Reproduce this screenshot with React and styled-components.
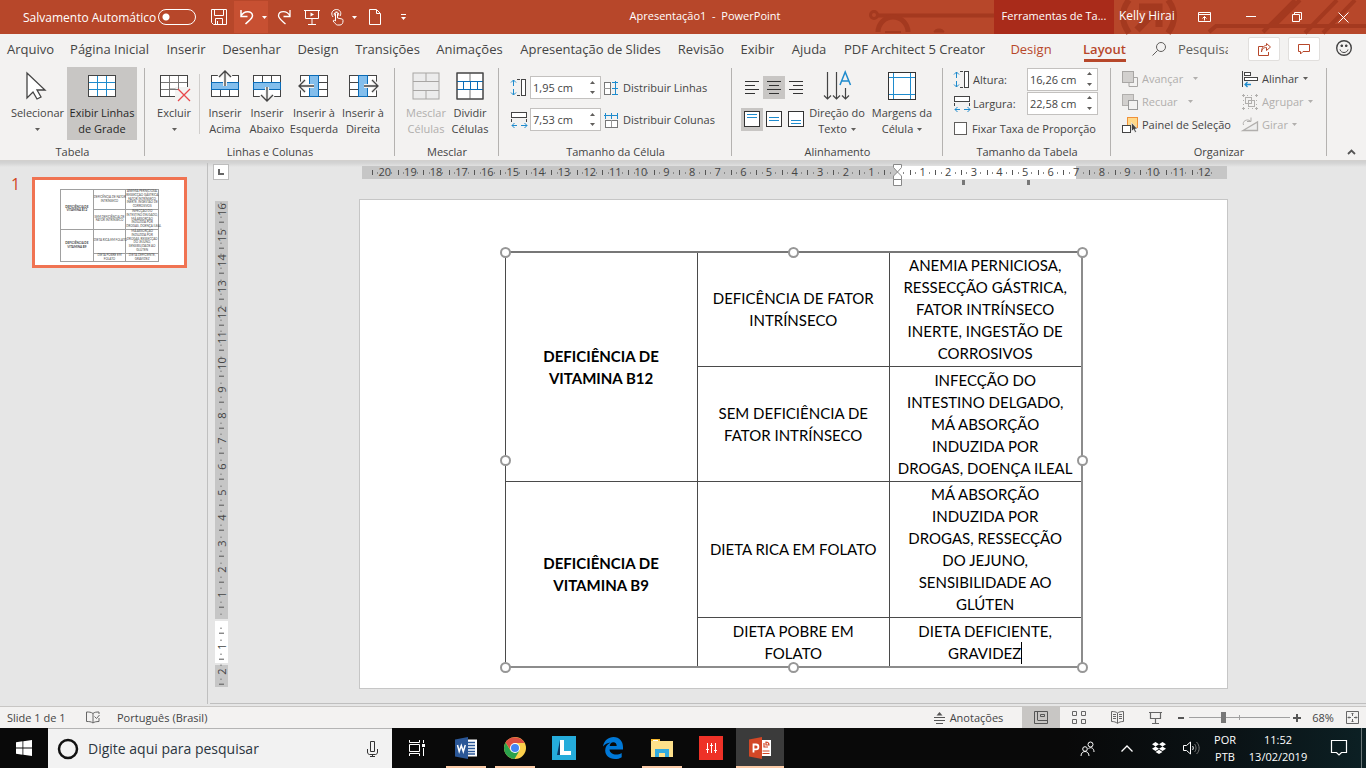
import React from "react";
import styled, { createGlobalStyle, css } from "styled-components";

const uiFont = '"Open Sans", "Noto Sans", sans-serif';
const slideFont = 'Lato, "Liberation Sans", sans-serif';
const c = {
  brand: "#b7472a",
  brandDark: "#a4391f",
  context: "#a92b1a",
  surface: "#f3f2f1",
  pressed: "#c8c6c4",
  line: "#b4b2b0",
  text: "#444444",
  disabled: "#b1afad",
  blue: "#1e8bcd",
  work: "#e6e6e6",
};

const GlobalStyle = createGlobalStyle`
  *, *::before, *::after { box-sizing: border-box; }
  body { margin: 0; font-family: ${uiFont}; font-size: 11px; color: ${c.text}; }
  button, input { font: inherit; color: inherit; margin: 0; padding: 0; border: 0; background: none; border-radius: 0; }
  svg { display: block; flex: none; fill: none; overflow: visible; }
`;

const Page = styled.div`
  display: flex;
  flex-direction: column;
  min-height: 100vh;
  min-width: 1366px;
  background: ${c.work};
`;

/* ---------- title bar ---------- */
const TitleBar = styled.header`
  position: relative;
  display: flex;
  align-items: stretch;
  height: 34px;
  background: ${c.brand};
  color: #fff;
  svg { stroke: #fff; }
`;
const QuickAccess = styled.div`
  display: flex;
  align-items: center;
  width: 416px;
  padding-left: 23px;
`;
const AutoSave = styled.label`
  display: flex;
  flex: none;
  align-items: center;
  justify-content: space-between;
  width: 173px;
  margin-right: 8px;
  font-size: 12px;
  white-space: nowrap;
`;
const Toggle = styled.input.attrs({ type: "checkbox" })`
  appearance: none;
  flex: none;
  width: 38px;
  height: 16px;
  border: 1px solid #fff;
  border-radius: 8px;
  background: radial-gradient(circle at 7px 7px, #fff 3px, transparent 4px);
`;
const QuickButton = styled.button`
  display: flex;
  align-items: center;
  justify-content: center;
  width: ${(p) => p.$w}px;
  height: 32px;
  background: ${(p) => (p.$on ? "#c75032" : "transparent")};
`;
const DocTitle = styled.h1`
  flex: 1;
  margin: 0;
  font-size: 11px;
  font-weight: 400;
  line-height: 32px;
  text-align: center;
  white-space: pre;
`;
const CircuitArt = styled.svg`
  position: absolute;
  top: 0;
  right: 0;
`;
const WindowSide = styled.div`
  position: relative;
  display: flex;
  width: 372px;
  line-height: 32px;
`;
const ContextTitle = styled.div`
  width: 120px;
  background: ${c.context};
  text-align: center;
  white-space: nowrap;
`;
const UserName = styled.div`
  width: 66px;
  padding-left: 5px;
  font-size: 12px;
  white-space: nowrap;
`;
const WindowButton = styled.button`
  display: flex;
  align-items: center;
  justify-content: center;
  width: ${(p) => p.$w}px;
`;

/* ---------- tabs ---------- */
const TabBar = styled.nav`
  display: flex;
  height: 33px;
  padding-left: 1px;
  background: ${c.surface};
`;
const Tab = styled.button`
  position: relative;
  width: ${(p) => p.$w}px;
  height: 30px;
  font-size: 13px;
  line-height: 30px;
  white-space: nowrap;
  text-align: center;
  color: ${(p) => (p.$context ? c.brand : c.text)};
  ${(p) =>
    p.$active &&
    css`
      font-weight: 600;
      &::after {
        content: "";
        position: absolute;
        left: 50%;
        bottom: 2px;
        width: 42px;
        height: 3px;
        margin-left: -21px;
        background: ${c.brand};
      }
    `}
`;
const TabTools = styled.div`
  display: flex;
  align-items: flex-start;
  margin-left: auto;
  padding: 3px 14px 0 0;
`;
const Search = styled.label`
  display: flex;
  align-items: center;
  gap: 12px;
  width: 76px;
  height: 24px;
  margin-right: 20px;
`;
const SearchInput = styled.input`
  width: 50px;
  font-size: 13px;
  &::placeholder { color: #605e5c; opacity: 1; }
`;
const CardButton = styled.button`
  display: flex;
  align-items: center;
  justify-content: center;
  width: 32px;
  height: 24px;
  margin-right: 8px;
  background: #fff;
  border: 1px solid #e1dfdd;
  border-radius: 2px;
`;
const FaceButton = styled.button`
  margin: 3px 0 0 8px;
`;

/* ---------- ribbon ---------- */
const Ribbon = styled.section`
  display: flex;
  height: 94px;
  background: ${c.surface};
  border-bottom: 1px solid #d2d0ce;
`;
const GroupBox = styled.div`
  display: flex;
  flex-direction: column;
  width: ${(p) => p.$w}px;
  background: linear-gradient(${c.line}, ${c.line}) right 1px / 1px 88px no-repeat;
`;
const GroupBody = styled.div`
  display: flex;
  height: 77px;
  padding-left: ${(p) => p.$pad || 0}px;
`;
const GroupTitle = styled.div`
  line-height: 16px;
  text-align: center;
  white-space: nowrap;
`;
const BigButton = styled.button`
  display: flex;
  flex-direction: column;
  align-items: center;
  width: ${(p) => p.$w}px;
  height: 73px;
  padding-top: 3px;
  line-height: 16px;
  background: ${(p) => (p.$on ? c.pressed : "transparent")};
  color: ${(p) => (p.disabled ? c.disabled : p.$on ? "#262626" : c.text)};
`;
const IconSlot = styled.span`
  display: flex;
  align-items: center;
  justify-content: center;
  height: 32px;
  margin-bottom: 3px;
`;
const LabelLine = styled.span`
  display: flex;
  align-items: center;
  justify-content: center;
  gap: 4px;
  height: 16px;
  white-space: nowrap;
`;
const Rule = styled.div`
  width: 1px;
  height: 60px;
  margin: 7px 4px 0 0;
  background: #d0cecc;
`;
const Stack = styled.div`
  display: flex;
  flex-direction: column;
  width: ${(p) => p.$w}px;
  gap: ${(p) => p.$gap || 0}px;
  padding-top: ${(p) => p.$top || 0}px;
`;
const Row = styled.div`
  display: flex;
  align-items: center;
  height: ${(p) => p.$h}px;
`;
const FieldLabel = styled.label`
  display: flex;
  align-items: center;
  gap: 3px;
  width: ${(p) => p.$w}px;
  white-space: nowrap;
`;
const SpinBox = styled.div`
  display: flex;
  width: 71px;
  height: 23px;
  background: #fff;
  border: 1px solid #c3c1bf;
`;
const SpinInput = styled.input`
  width: 54px;
  padding-left: 2px;
`;
const SpinArrows = styled.div`
  display: flex;
  flex-direction: column;
  width: 14px;
`;
const SpinArrow = styled.button`
  display: flex;
  flex: 1;
  align-items: center;
  justify-content: center;
`;
const SmallButton = styled.button`
  display: flex;
  align-items: center;
  gap: ${(p) => p.$gap || 4}px;
  height: 23px;
  padding-left: ${(p) => p.$inset || 0}px;
  white-space: nowrap;
  color: ${(p) => (p.disabled ? c.disabled : c.text)};
`;
const CaretSlot = styled.span`
  padding-left: ${(p) => (p.$wide ? 6 : 0)}px;
`;
const AlignButton = styled.button`
  display: flex;
  align-items: center;
  justify-content: center;
  width: 22px;
  height: 23px;
  background: ${(p) => (p.$on ? c.pressed : "transparent")};
`;
const CheckLabel = styled.label`
  display: flex;
  align-items: center;
  gap: 5px;
  height: 26px;
  white-space: nowrap;
`;
const CheckBox = styled.input.attrs({ type: "checkbox" })`
  appearance: none;
  width: 13px;
  height: 13px;
  background: #fff;
  border: 1px solid #605e5c;
`;
const CollapseButton = styled.button`
  display: flex;
  align-items: flex-end;
  justify-content: center;
  width: 39px;
  padding: 0 0 5px 10px;
`;

/* ---------- work area ---------- */
const Work = styled.main`
  display: flex;
  flex: 1;
  background: linear-gradient(#d0d0d0, #d4d4d4 2px, ${c.work} 6px);
`;
const ThumbPane = styled.aside`
  display: flex;
  align-items: flex-start;
  width: 208px;
  margin: 2px 0;
  padding: 14px 0 0 11px;
  border-right: 1px solid #bfbfbf;
`;
const ThumbNumber = styled.span`
  width: 21px;
  font-size: 16px;
  line-height: 14px;
  color: #d24726;
`;
const Thumb = styled.div`
  width: 155px;
  height: 91px;
  padding: 9px 0 0 25px;
  background: #fff;
  border: 3px solid #f07352;
`;
const Editor = styled.section`
  display: grid;
  flex: 1;
  grid-template: 35px 1fr / 16px 1fr;
  margin: 0 0 2px 2px;
  padding: 3px 9px 0 3px;
  border-bottom: 1px solid #bfbfbf;
`;
const TabStop = styled.button`
  display: flex;
  align-items: center;
  justify-content: center;
  width: 16px;
  height: 16px;
  background: #fff;
  border: 1px solid #bdbdbd;
`;
const Stage = styled.div`
  display: flex;
  justify-content: center;
`;
const RulerFrame = styled.div`
  position: relative;
  width: 868px;
  padding: 2px 0 0 3px;
`;
const RulerH = styled.div`
  display: flex;
  height: 13px;
  padding: 0 10px;
  background: linear-gradient(90deg, #c6c6c6 536px, #fff 536px, #fff 714px, #c6c6c6 714px);
`;
const RulerV = styled.div`
  width: 13px;
  height: 486px;
  margin: 2px 0 0 2px;
  overflow: hidden;
  background: linear-gradient(#c6c6c6 418px, ${c.work} 418px, ${c.work} 420px, #fff 420px, #fff 462px, ${c.work} 462px, ${c.work} 464px, #c6c6c6 464px);
`;
const RulerVScale = styled.div`
  display: flex;
  flex-direction: column;
  height: 488px;
  margin-top: -4px;
`;
const tick = "linear-gradient(#555, #555)";
const dot = "linear-gradient(#8a8a8a, #8a8a8a)";
const UnitH = styled.span`
  flex: 1;
  line-height: 12px;
  text-align: center;
  background: ${tick} 0 50% / 1px 5px no-repeat, ${dot} 22% 50% / 1px 2px no-repeat, ${dot} 78% 50% / 1px 2px no-repeat;
`;
const UnitV = styled.span`
  flex: 1;
  writing-mode: vertical-rl;
  transform: rotate(180deg);
  line-height: 13px;
  text-align: center;
  background: ${tick} 50% 0 / 5px 1px no-repeat, ${dot} 50% 22% / 2px 1px no-repeat, ${dot} 50% 78% / 2px 1px no-repeat;
`;
const IndentMark = styled.svg`
  position: absolute;
  left: 534px;
  top: 0;
`;
const ColumnMark = styled.i`
  position: absolute;
  left: ${(p) => p.$x}px;
  top: 16px;
  width: 3px;
  height: 5px;
  background: #777;
`;
const Slide = styled.article`
  width: 869px;
  flex: none;
  height: 490px;
  padding: 51px 0 0 145px;
  background: #fff;
  border: 1px solid #c6c6c6;
`;
const SelectionFrame = styled.div`
  position: relative;
  width: 578px;
`;
const HandleLayer = styled.div`
  position: absolute;
  inset: 1px 1px 1px 0;
  pointer-events: none;
`;
const Handle = styled.i`
  position: absolute;
  left: ${(p) => p.$x}%;
  top: ${(p) => p.$y}%;
  width: 11px;
  height: 11px;
  margin: -5px 0 0 -5px;
  background: #fff;
  border: 2px solid #979797;
  border-radius: 50%;
`;
const DataTable = styled.table`
  table-layout: fixed;
  border-collapse: collapse;
  width: ${(p) => (p.$mini ? 99 : 578)}px;
  font-family: ${slideFont};
  font-size: ${(p) => (p.$mini ? 3 : 15)}px;
  line-height: ${(p) => (p.$mini ? 1.25 : "22px")};
  text-align: center;
  color: ${(p) => (p.$mini ? "#444" : "#000")};
  border: 1px solid ${(p) => (p.$mini ? "#a0a0a0" : "#8c8c8c")};
  ${(p) =>
    !p.$mini &&
    css`
      border-top: 2px solid #777;
      border-left-color: #222;
      border-bottom-width: 2px;
      border-right-width: 2px;
    `}
`;
const TableRow = styled.tr`
  height: ${(p) => p.$h}px;
`;
const cell = css`
  padding: 0;
  white-space: nowrap;
  vertical-align: middle;
  border: 1px solid ${(p) => (p.$mini ? "#a0a0a0" : "#4a4a4a")};
`;
const HeadCell = styled.th`
  ${cell}
  font-weight: 700;
`;
const Cell = styled.td`
  ${cell}
`;
const Caret = styled.span`
  border-right: 1px solid #000;
  padding: 2px 0;
`;

/* ---------- status bar ---------- */
const StatusBar = styled.footer`
  display: flex;
  align-items: center;
  height: 22px;
  padding: 0 6px 0 7px;
  background: ${c.surface};
  border-top: 1px solid #c8c6c4;
  white-space: nowrap;
`;
const StatusText = styled.span`
  width: ${(p) => p.$w}px;
`;
const StatusButton = styled.button`
  display: flex;
  align-items: center;
  justify-content: center;
  gap: 5px;
  width: ${(p) => p.$w}px;
  height: 21px;
  background: ${(p) => (p.$on ? c.pressed : "transparent")};
`;
const StatusSide = styled.div`
  display: flex;
  align-items: center;
  margin-left: auto;
`;
const ZoomSlider = styled.input.attrs({ type: "range" })`
  appearance: none;
  width: 101px;
  height: 13px;
  margin: 0 2px;
  background: linear-gradient(#a0a0a0, #a0a0a0) 50% 50% / 1px 5px no-repeat, linear-gradient(#a0a0a0, #a0a0a0) 0 50% / 100% 1px no-repeat;
  &::-webkit-slider-thumb {
    appearance: none;
    width: 5px;
    height: 11px;
    background: #777;
  }
`;

/* ---------- taskbar ---------- */
const TaskBar = styled.div`
  display: flex;
  height: 40px;
  color: #fff;
  background: linear-gradient(90deg, #090909 78%, #0a1215 90%, #0c2024);
`;
const StartButton = styled.button`
  display: flex;
  align-items: center;
  justify-content: center;
  width: 48px;
`;
const TaskSearch = styled.label`
  display: flex;
  align-items: center;
  gap: 10px;
  width: 344px;
  margin-right: 1px;
  padding: 0 14px 0 10px;
  background: #f2f2f2;
  border-top: 1px solid #b4b4b4;
`;
const TaskSearchInput = styled.input`
  flex: 1;
  min-width: 0;
  font-size: 14px;
  &::placeholder { color: #2b3540; opacity: 1; }
`;
const Apps = styled.div`
  display: flex;
  gap: 1px;
`;
const AppButton = styled.button`
  display: flex;
  align-items: center;
  justify-content: center;
  width: 48px;
  background: ${(p) => (p.$on ? "#3b3b3b" : "transparent")};
  ${(p) =>
    (p.$run || p.$on) &&
    css`
      background-image: linear-gradient(#fbcaa6, #fbcaa6);
      background-size: ${p.$on ? 48 : 40}px 2px;
      background-position: center bottom;
      background-repeat: no-repeat;
    `}
`;
const Tray = styled.div`
  display: flex;
  margin-left: auto;
  padding-right: 4px;
  line-height: 17px;
  text-align: center;
`;
const TrayItem = styled.button`
  display: flex;
  flex-direction: column;
  align-items: center;
  justify-content: center;
  width: ${(p) => p.$w}px;
  white-space: nowrap;
`;
const DesktopEdge = styled.div`
  width: 1px;
  background: #6b7779;
`;

/* ---------- icons ---------- */
const Svg = ({ w, h, children, s = "#444", ...rest }) => (
  <svg width={w} height={h} viewBox={`0 0 ${w} ${h}`} stroke={s} aria-hidden="true" {...rest}>
    {children}
  </svg>
);
const FlatSvg = styled(Svg)`
  && { stroke: none; }
`;
const Down = ({ color = "#605e5c" }) => (
  <FlatSvg w={5} h={3}>
    <path d="M0 0h5L2.500 3z" fill={color} />
  </FlatSvg>
);
const Up = () => (
  <FlatSvg w={5} h={3}>
    <path d="M0 3h5L2.500 0z" fill="#605e5c" />
  </FlatSvg>
);
const Pointer = () => (
  <Svg w={22} h={30}>
    <path d="M2 2v25l6-6 4 7 4-2-4-7h8z" fill="#fff" strokeWidth="1.300" transform="translate(-2 0)" />
  </Svg>
);
const GridIcon = ({ line = c.blue, cross }) => (
  <Svg w={32} h={28}>
    <rect x="2.500" y="3.500" width="27" height="21" fill="#fff" />
    <path d="M11.500 4v20M20.500 4v20M3 10.500h26M3 17.500h26" stroke={line} />
    <rect x="2.500" y="3.500" width="27" height="21" />
    {cross && <path d="M17 15h16v15H17z" fill={c.surface} stroke="none" />}
    {cross && <path d="M17 17.500h3.500V15M11.500 24v-7h6" stroke={line} />}
    {cross && <path d="M20 17l12 12M32 17L20 29" stroke="#e8474b" strokeWidth="1.300" />}
  </Svg>
);
const InsertIcon = ({ dir }) => {
  const row = dir === "up" || dir === "down";
  const arrow = {
    up: "M16 16V1M10 7l6-6 6 6",
    down: "M16 17v14M10 25l6 6 6-6",
    left: "M16 16H1M7 10l-6 6 6 6",
    right: "M17 16h14M25 10l6 6-6 6",
  }[dir];
  const lines = {
    up: "M11.500 20v6M20.500 20v6",
    down: "M11.500 6v6M20.500 6v6",
    left: "M20 12.500h9M20 19.500h9",
    right: "M3 12.500h8M3 19.500h8",
  }[dir];
  return (
    <Svg w={32} h={32}>
      <rect x="2.500" y="5.500" width="27" height="21" fill="#fff" />
      <path d={lines} />
      {row ? (
        <rect x="2.500" y="12.500" width="27" height="7" fill="#83beec" stroke="#0a6cb8" />
      ) : (
        <rect x="11.500" y="5.500" width="9" height="21" fill="#83beec" stroke="#0a6cb8" />
      )}
      <path d={arrow} stroke={c.surface} strokeWidth="4" />
      <path d={arrow} strokeWidth="1.300" />
    </Svg>
  );
};
const MergeIcon = () => (
  <Svg w={28} h={28} s="#a8a6a4">
    <rect x="1" y="1" width="26" height="26" fill="#ececec" />
    <path d="M1 9.500h26M1 18.500h26M14 1v8M14 19v8" />
  </Svg>
);
const SplitIcon = () => (
  <Svg w={28} h={28}>
    <rect x="1" y="1" width="26" height="26" fill="#fff" />
    <path d="M14 1v8M14 18v9" stroke="#777" />
    <path d="M1 9.500h26M1 17.500h26M7.500 10v7M14.500 10v7M21.500 10v7" stroke="#0a6cb8" />
    <rect x="1" y="1" width="26" height="26" />
  </Svg>
);
const HeightIcon = () => (
  <Svg w={16} h={17}>
    <path d="M2.500 1v6M2.500 10v6M0 3.500L2.500 1 5 3.500M0 13.500L2.500 16 5 13.500" stroke={c.blue} />
    <path d="M6 .500h3M6 16.500h3" />
    <rect x="10.500" y=".500" width="4" height="16" fill="#fff" />
  </Svg>
);
const WidthIcon = () => (
  <Svg w={16} h={17}>
    <rect x=".500" y="1.500" width="15" height="5" fill="#fff" />
    <path d="M.500 8v3M15.500 8v3" />
    <path d="M1 14.500h5M10 14.500h6M3.500 12L1 14.500 3.500 17M13.500 12l2.500 2.500-2.500 2.500" stroke={c.blue} />
  </Svg>
);
const DistRowsIcon = () => (
  <Svg w={16} h={16}>
    <rect x="1.500" y="2.500" width="6" height="12" fill="#fff" stroke="#777" />
    <path d="M1 8.500h6" stroke="#999" />
    <path d="M12.500 1v14M9 2.500h6M9 8.500h6M9 14.500h6" stroke={c.blue} />
  </Svg>
);
const DistColsIcon = () => (
  <Svg w={16} h={16}>
    <rect x="2.500" y="8.500" width="12" height="7" fill="#fff" stroke="#777" />
    <path d="M8.500 8v7" stroke="#999" />
    <path d="M1 3.500h14M2.500 1v6M8.500 1v6M14.500 1v6" stroke={c.blue} />
  </Svg>
);
const TextAlignIcon = ({ kind }) => {
  const d = {
    left: "M1 1.500h14M1 5.500h10M1 9.500h14M1 13.500h10",
    center: "M1 1.500h14M3 5.500h10M1 9.500h14M3 13.500h10",
    right: "M1 1.500h14M5 5.500h10M1 9.500h14M5 13.500h10",
  }[kind];
  return (
    <Svg w={16} h={15} s="#333">
      <path d={d} />
    </Svg>
  );
};
const VAlignIcon = ({ y }) => (
  <Svg w={16} h={17} s="#333">
    <rect x=".500" y=".500" width="15" height="15" fill="#fff" />
    <path d={`M3 ${y}.500h10M3 ${y + 3}.500h10`} stroke={c.blue} />
  </Svg>
);
const DirectionIcon = () => (
  <Svg w={28} h={28}>
    <path d="M4.500 0v27M1 23.500L4.500 27 8 23.500M13.500 0v27M10 23.500l3.500 3.500 3.500-3.500M22.500 16v11M19 23.500l3.500 3.500 3.500-3.500" strokeWidth="1.200" />
    <path d="M17 13L22.200 0 27.500 13M19 9h7" stroke={c.blue} strokeWidth="1.500" />
  </Svg>
);
const MarginIcon = () => (
  <Svg w={28} h={28} s="#333">
    <rect x=".500" y=".500" width="27" height="27" fill="#fff" />
    <path d="M5.500 1v26M22.500 1v26M1 5.500h26M1 22.500h26" stroke={c.blue} />
  </Svg>
);
const ForwardIcon = () => (
  <Svg w={16} h={16} s="#a8a6a4">
    <path d="M12 6.500h3.500v9H7V12" />
    <rect x=".500" y=".500" width="11" height="11" fill="#d2d0ce" />
  </Svg>
);
const BackwardIcon = () => (
  <Svg w={16} h={16} s="#b1afad">
    <rect x=".500" y=".500" width="11" height="11" fill="#d2d0ce" />
    <rect x="6.500" y="6.500" width="9" height="9" fill="#f3f2f1" stroke="#999" />
  </Svg>
);
const PaneIcon = () => (
  <Svg w={16} h={16}>
    <rect x="5.500" y=".500" width="10" height="10" fill="#ffd98a" stroke="#f0913a" />
    <rect x=".500" y="8.500" width="8" height="7" fill="#fff" />
    <path d="M9.500 5.500v9l2-2 1.500 3 1.500-.800-1.500-2.700h2.500z" fill="#444" stroke="#fff" strokeWidth=".600" />
  </Svg>
);
const AlignObjIcon = () => (
  <Svg w={16} h={16}>
    <path d="M.500 0v16" />
    <rect x="2.500" y="1.500" width="6" height="3" fill="#fff" />
    <rect x="2.500" y="6.500" width="13" height="3" fill="#fff" />
    <path d="M3 13.500h6M5.500 11L3 13.500 5.500 16" stroke={c.blue} strokeWidth="1.300" />
  </Svg>
);
const GroupIcon = () => (
  <Svg w={16} h={16} s="#b1afad">
    <rect x="3.500" y="3.500" width="6" height="6" />
    <rect x="6.500" y="6.500" width="6" height="6" />
    <path d="M0 1.500h3M1.500 0v3M13 1.500h3M14.500 0v3M0 14.500h3M1.500 13v3M13 14.500h3M14.500 13v3M5 1.500h1M9 1.500h1M1.500 6v1M1.500 10v1M14.500 6v1M14.500 10v1M6 14.500h1M10 14.500h1" />
  </Svg>
);
const RotateIcon = () => (
  <Svg w={16} h={16} s="#b1afad">
    <path d="M1 13.500h14.500V5z" fill="#eee" strokeWidth="1.300" />
    <path d="M1.500 8C0 4 5 1.500 8.500 4M9 .500V4.500H5" />
  </Svg>
);

const CircuitPattern = () => (
  <CircuitArt width="501" height="34" viewBox="0 0 501 34" aria-hidden="true">
    <g style={{ stroke: c.brandDark }} strokeWidth="4" fill="none">
      <circle cx="9" cy="15" r="3.500" strokeWidth="3" />
      <path d="M13 15.500h116" />
      <path d="M13 32a15 15 0 0 1 30 0" strokeWidth="5" />
      <path d="M20 32h16" strokeWidth="2" />
      <path d="M69 32a5 3 0 0 1 10 0z" strokeWidth="1" fill={c.brandDark} />
      <path d="M264 0c-8 10-8 22 0 33M303 0c8 10 8 22 0 33" strokeWidth="6" />
      <path d="M272 30L293 8M274 7h20v20" strokeWidth="7" />
      <path d="M344 32l7-6h58L435 0M398 32L430 0M440 33L472 0M458 33L490 0M409 26h92" />
    </g>
  </CircuitArt>
);

/* ---------- data ---------- */
const tabs = [
  ["Arquivo", 59], ["Página Inicial", 99], ["Inserir", 54], ["Desenhar", 77], ["Design", 56],
  ["Transições", 83], ["Animações", 81], ["Apresentação de Slides", 161], ["Revisão", 60],
  ["Exibir", 53], ["Ajuda", 50], ["PDF Architect 5 Creator", 161],
];
const tableRows = [
  { h: 114, mini: 20, head: ["DEFICIÊNCIA DE", "VITAMINA B12"], mid: ["DEFICÊNCIA DE FATOR", "INTRÍNSECO"], last: ["ANEMIA PERNICIOSA,", "RESSECÇÃO GÁSTRICA,", "FATOR INTRÍNSECO", "INERTE, INGESTÃO DE", "CORROSIVOS"] },
  { h: 115, mini: 19, mid: ["SEM DEFICIÊNCIA DE", "FATOR INTRÍNSECO"], last: ["INFECÇÃO DO", "INTESTINO DELGADO,", "MÁ ABSORÇÃO", "INDUZIDA POR", "DROGAS, DOENÇA ILEAL"] },
  { h: 136, mini: 24, head: ["DEFICIÊNCIA DE", "VITAMINA B9"], mid: ["DIETA RICA EM FOLATO"], last: ["MÁ ABSORÇÃO", "INDUZIDA POR", "DROGAS, RESSECÇÃO", "DO JEJUNO,", "SENSIBILIDADE AO", "GLÚTEN"] },
  { h: 50, mini: 8, mid: ["DIETA POBRE EM", "FOLATO"], last: ["DIETA DEFICIENTE,", "GRAVIDEZ"], caret: true },
];

const Lines = ({ items, caret }) =>
  items.map((t, i) => (
    <React.Fragment key={t}>
      {i > 0 && <br />}
      {caret && i === items.length - 1 ? <Caret>{t}</Caret> : t}
    </React.Fragment>
  ));

const SlideTable = ({ mini }) => (
  <DataTable $mini={mini}>
    <tbody>
      {tableRows.map((r) => (
        <TableRow key={r.h} $h={mini ? r.mini : r.h}>
          {r.head && (
            <HeadCell scope="rowgroup" rowSpan={2} $mini={mini}>
              <Lines items={r.head} />
            </HeadCell>
          )}
          <Cell $mini={mini}><Lines items={r.mid} /></Cell>
          <Cell $mini={mini}><Lines items={r.last} caret={r.caret && !mini} /></Cell>
        </TableRow>
      ))}
    </tbody>
  </DataTable>
);

const Group = ({ w, title, pad, children }) => (
  <GroupBox $w={w}>
    <GroupBody $pad={pad}>{children}</GroupBody>
    <GroupTitle>{title}</GroupTitle>
  </GroupBox>
);
const Big = ({ w, icon, lines, on, disabled, caret }) => (
  <BigButton $w={w} $on={on} disabled={disabled}>
    <IconSlot>{icon}</IconSlot>
    {lines.map((l, i) => (
      <LabelLine key={l}>
        {l}
        {caret === "inline" && i === lines.length - 1 && <Down />}
      </LabelLine>
    ))}
    {caret === "below" && <LabelLine><Down /></LabelLine>}
  </BigButton>
);
const Spin = ({ id, value }) => (
  <SpinBox>
    <SpinInput id={id} defaultValue={value} />
    <SpinArrows>
      <SpinArrow aria-label="Aumentar"><Up /></SpinArrow>
      <SpinArrow aria-label="Diminuir"><Down /></SpinArrow>
    </SpinArrows>
  </SpinBox>
);
const MenuCaret = ({ wide, disabled }) => (
  <CaretSlot $wide={wide}><Down color={disabled ? c.disabled : undefined} /></CaretSlot>
);

const hUnits = Array.from({ length: 33 }, (_, i) => 20 - i);
const vUnits = Array.from({ length: 19 }, (_, i) => 16 - i);
const handles = [[0, 0], [50, 0], [100, 0], [0, 50], [100, 50], [0, 100], [50, 100], [100, 100]];

export default function App() {
  return (
    <>
      <GlobalStyle />
      <Page>
        <TitleBar>
          <CircuitPattern />
          <QuickAccess>
            <AutoSave>Salvamento Automático<Toggle /></AutoSave>
            <QuickButton $w={30} aria-label="Salvar">
              <Svg w={16} h={16} s="#fff"><path d="M.500.500h15v15H2.500l-2-2zM3.500 1v5.500h9V1M4.500 15v-5.500h7V15M6.500 12v3" /></Svg>
            </QuickButton>
            <QuickButton $w={26} $on aria-label="Desfazer">
              <Svg w={14} h={16} s="#fff"><path d="M1 1v6.500h6.500M1 7C4 1 12 1.500 12.500 6.500c.200 3-3.500 5-7 8.500" strokeWidth="1.500" /></Svg>
            </QuickButton>
            <QuickButton $w={8} $on aria-label="Opções de desfazer"><Down color="#fff" /></QuickButton>
            <QuickButton $w={31} aria-label="Refazer">
              <Svg w={14} h={16} s="#fff"><path d="M13 1v6.500H6.500M13 7C10 1 2 1.500 1.500 6.500c-.200 3 3.500 5 7 8.500" strokeWidth="1.300" /></Svg>
            </QuickButton>
            <QuickButton $w={26} aria-label="Iniciar apresentação">
              <Svg w={16} h={16} s="#fff"><path d="M0 1.500h16M1.500 2v7.500h13V2M8 10v5M4 15.500h8" /><path d="M6.500 3.500v4l3.500-2z" fill="#fff" stroke="none" /></Svg>
            </QuickButton>
            <QuickButton $w={24} aria-label="Modo de toque">
              <Svg w={13} h={17} s="#fff"><path d="M4.500 12V4.500c0-1.500 2-1.500 2 0V9l4.500 1c1 .300 1 1 1 2 0 2-1 4-3 4H6.500c-1.500 0-3-2.500-4.500-4 .500-1.500 2-.500 2.500 0M2 8C-1 4 2 .500 5.500.500S11 4 9 7M3.500 6.500c-1-2 .500-3.500 2-3.500s3 1.500 2 3.500" /></Svg>
            </QuickButton>
            <QuickButton $w={10} aria-label="Opções de toque"><Down color="#fff" /></QuickButton>
            <QuickButton $w={32} aria-label="Novo">
              <Svg w={12} h={16} s="#fff"><path d="M.500.500h7l4 4v11H.500zM7.500 1v3.500H11" /></Svg>
            </QuickButton>
            <QuickButton $w={24} aria-label="Personalizar">
              <Svg w={5} h={6} s="#fff"><path d="M0 .500h5" /><path d="M0 3h5L2.500 6z" fill="#fff" stroke="none" /></Svg>
            </QuickButton>
          </QuickAccess>
          <DocTitle>{"Apresentação1  -  PowerPoint"}</DocTitle>
          <WindowSide>
            <ContextTitle>Ferramentas de Ta...</ContextTitle>
            <UserName>Kelly Hirai</UserName>
            <WindowButton $w={48} aria-label="Opções da faixa">
              <Svg w={13} h={10} s="#fff"><path d="M.500.500h12v9H.500zM1 2.500h11M6.500 8.500v-4M4.500 6.500l2-2 2 2" /></Svg>
            </WindowButton>
            <WindowButton $w={46} aria-label="Minimizar"><Svg w={10} h={2} s="#fff"><path d="M0 .500h10" /></Svg></WindowButton>
            <WindowButton $w={46} aria-label="Restaurar"><Svg w={10} h={10} s="#fff"><path d="M.500 2.500h7v7h-7zM2.500 2V.500h7v7H8" /></Svg></WindowButton>
            <WindowButton $w={46} aria-label="Fechar"><Svg w={11} h={11} s="#fff"><path d="M.500.500l10 10M10.500.500l-10 10" /></Svg></WindowButton>
          </WindowSide>
        </TitleBar>

        <TabBar>
          {tabs.map(([t, w]) => <Tab key={t} $w={w}>{t}</Tab>)}
          <Tab $w={72} $context>Design</Tab>
          <Tab $w={75} $context $active>Layout</Tab>
          <TabTools>
            <Search>
              <Svg w={14} h={14} s="#605e5c"><circle cx="9" cy="5" r="4.500" /><path d="M5.500 8.500L.500 13.500" /></Svg>
              <SearchInput aria-label="Pesquisar" placeholder="Pesquisar" />
            </Search>
            <CardButton aria-label="Compartilhar">
              <Svg w={13} h={13} s={c.brand}><path d="M5 3.500H.500v9h10V9M3.500 9C4 5.500 6 4.500 8.500 4.500V7.500L12.500 4 8.500.500V2.500C5.500 2.500 3.500 5 3.500 9" /></Svg>
            </CardButton>
            <CardButton aria-label="Comentários">
              <Svg w={12} h={11} s={c.brand}><path d="M.500.500h11v7H5L2.500 10V7.500h-2z" /></Svg>
            </CardButton>
            <FaceButton aria-label="Enviar opinião">
              <Svg w={16} h={16}><circle cx="8" cy="8" r="7.300" strokeWidth="1.400" /><path d="M4 9.500c1 4 7 4 8 0" /><path d="M5 5h1.500v1.500H5zM9.500 5H11v1.500H9.500z" fill="#444" /></Svg>
            </FaceButton>
          </TabTools>
        </TabBar>

        <Ribbon>
          <Group w={145} title="Tabela" pad={8}>
            <Big w={59} icon={<Pointer />} lines={["Selecionar"]} caret="below" />
            <Big w={70} on icon={<GridIcon />} lines={["Exibir Linhas", "de Grade"]} />
          </Group>
          <Group w={250} title="Linhas e Colunas" pad={4}>
            <Big w={50} icon={<GridIcon line="#777" cross />} lines={["Excluir"]} caret="below" />
            <Rule />
            <Big w={42} icon={<InsertIcon dir="up" />} lines={["Inserir", "Acima"]} />
            <Big w={42} icon={<InsertIcon dir="down" />} lines={["Inserir", "Abaixo"]} />
            <Big w={52} icon={<InsertIcon dir="left" />} lines={["Inserir à", "Esquerda"]} />
            <Big w={46} icon={<InsertIcon dir="right" />} lines={["Inserir à", "Direita"]} />
          </Group>
          <Group w={104} title="Mesclar" pad={8}>
            <Big w={46} disabled icon={<MergeIcon />} lines={["Mesclar", "Células"]} />
            <Big w={42} icon={<SplitIcon />} lines={["Dividir", "Células"]} />
          </Group>
          <Group w={233} title="Tamanho da Célula" pad={12}>
            <Stack $w={220} $gap={9} $top={9}>
              <Row $h={23}>
                <FieldLabel $w={19} htmlFor="cell-h" aria-label="Altura da célula"><HeightIcon /></FieldLabel>
                <Spin id="cell-h" value="1,95 cm" />
                <SmallButton $inset={2}><DistRowsIcon />Distribuir Linhas</SmallButton>
              </Row>
              <Row $h={23}>
                <FieldLabel $w={19} htmlFor="cell-w" aria-label="Largura da célula"><WidthIcon /></FieldLabel>
                <Spin id="cell-w" value="7,53 cm" />
                <SmallButton $inset={2}><DistColsIcon />Distribuir Colunas</SmallButton>
              </Row>
            </Stack>
          </Group>
          <Group w={211} title="Alinhamento" pad={9}>
            <Stack $w={66} $gap={9} $top={9}>
              <Row $h={23}>
                <AlignButton aria-label="Esquerda"><TextAlignIcon kind="left" /></AlignButton>
                <AlignButton $on aria-label="Centro"><TextAlignIcon kind="center" /></AlignButton>
                <AlignButton aria-label="Direita"><TextAlignIcon kind="right" /></AlignButton>
              </Row>
              <Row $h={23}>
                <AlignButton $on aria-label="Em cima"><VAlignIcon y={3} /></AlignButton>
                <AlignButton aria-label="No meio"><VAlignIcon y={6} /></AlignButton>
                <AlignButton aria-label="Embaixo"><VAlignIcon y={9} /></AlignButton>
              </Row>
            </Stack>
            <Big w={60} icon={<DirectionIcon />} lines={["Direção do", "Texto"]} caret="inline" />
            <Big w={70} icon={<MarginIcon />} lines={["Margens da", "Célula"]} caret="inline" />
          </Group>
          <Group w={168} title="Tamanho da Tabela" pad={11}>
            <Stack $w={150}>
              <Row $h={24}>
                <FieldLabel $w={73} htmlFor="table-h"><HeightIcon />Altura:</FieldLabel>
                <Spin id="table-h" value="16,26 cm" />
              </Row>
              <Row $h={24}>
                <FieldLabel $w={73} htmlFor="table-w"><WidthIcon />Largura:</FieldLabel>
                <Spin id="table-w" value="22,58 cm" />
              </Row>
              <CheckLabel><CheckBox />Fixar Taxa de Proporção</CheckLabel>
            </Stack>
          </Group>
          <Group w={216} title="Organizar" pad={11}>
            <Stack $w={120}>
              <SmallButton disabled><ForwardIcon />Avançar<MenuCaret wide disabled /></SmallButton>
              <SmallButton disabled><BackwardIcon />Recuar<MenuCaret wide disabled /></SmallButton>
              <SmallButton><PaneIcon />Painel de Seleção</SmallButton>
            </Stack>
            <Stack $w={80}>
              <SmallButton><AlignObjIcon />Alinhar<MenuCaret /></SmallButton>
              <SmallButton disabled><GroupIcon />Agrupar<MenuCaret disabled /></SmallButton>
              <SmallButton disabled><RotateIcon />Girar<MenuCaret disabled /></SmallButton>
            </Stack>
          </Group>
          <CollapseButton aria-label="Recolher faixa">
            <Svg w={9} h={6} s="#555"><path d="M1 5l3.500-3.500L8 5" strokeWidth="1.800" /></Svg>
          </CollapseButton>
        </Ribbon>

        <Work>
          <ThumbPane>
            <ThumbNumber>1</ThumbNumber>
            <Thumb><SlideTable mini /></Thumb>
          </ThumbPane>
          <Editor>
            <TabStop aria-label="Tabulação"><Svg w={6} h={6} s="#666"><path d="M1 0v5h5" strokeWidth="2" /></Svg></TabStop>
            <Stage>
              <RulerFrame>
                <RulerH>{hUnits.map((n) => <UnitH key={n}>{n === 0 ? "" : Math.abs(n)}</UnitH>)}</RulerH>
                <IndentMark width="9" height="23" viewBox="0 0 9 23" stroke="#888" aria-hidden="true">
                  <path d="M.500.500h8v3L4.500 8 .500 3.500zM.500 15.500V12L4.500 8l4 4v3.500zM.500 15.500h8v6h-8z" fill="#fff" />
                </IndentMark>
                <ColumnMark $x={603} />
                <ColumnMark $x={668} />
              </RulerFrame>
            </Stage>
            <RulerV>
              <RulerVScale>{vUnits.map((n) => <UnitV key={n}>{n === 0 ? "" : Math.abs(n)}</UnitV>)}</RulerVScale>
            </RulerV>
            <Stage>
              <Slide>
                <SelectionFrame>
                  <SlideTable />
                  <HandleLayer>
                    {handles.map(([x, y]) => <Handle key={`${x}-${y}`} $x={x} $y={y} />)}
                  </HandleLayer>
                </SelectionFrame>
              </Slide>
            </Stage>
          </Editor>
        </Work>

        <StatusBar>
          <StatusText $w={79}>Slide 1 de 1</StatusText>
          <StatusText $w={31}>
            <Svg w={14} h={13} s="#666"><path d="M7 2.500C5 1 3 1 .500 1v9.500c2.500 0 4.500 0 6.500 1.500zM7 2.500C8.500 1.200 10 1 13 1v2M7 12c1-1 3-1.500 6-1.500V7M8.500 5.500l2 2L13.500 4" /></Svg>
          </StatusText>
          <StatusText $w={100}>Português (Brasil)</StatusText>
          <StatusSide>
            <StatusButton $w={107}>
              <Svg w={11} h={11} s="#555"><path d="M0 5.500h11M0 8.500h11M2 11.500h7" /><path d="M2.500 3.500h6L5.500 0z" fill="#555" stroke="none" /></Svg>
              Anotações
            </StatusButton>
            <StatusButton $w={38} $on aria-label="Normal"><Svg w={14} h={13} s="#555"><path d="M.500.500h13v12H.500zM3.500 1v8M3.500 9.500H13M6.500 3.500h4v2h-4z" /></Svg></StatusButton>
            <StatusButton $w={38} aria-label="Classificação de slides"><Svg w={14} h={13} s="#666"><path d="M.500.500h4v4h-4zM9.500.500h4v4h-4zM.500 8.500h4v4h-4zM9.500 8.500h4v4h-4z" /></Svg></StatusButton>
            <StatusButton $w={38} aria-label="Modo de leitura"><Svg w={13} h={13} s="#666"><path d="M6.500 2C5 .800 3 .500.500.500v10c2.500 0 4.500.500 6 2 1.500-1.500 3.500-2 6-2V.500C10 .500 8 .800 6.500 2zv10M2 3.500h3M2 5.500h3M2 7.500h3M8 3.500h3M8 5.500h3M8 7.500h3" /></Svg></StatusButton>
            <StatusButton $w={38} aria-label="Apresentação"><Svg w={13} h={13} s="#666"><path d="M0 1.500h13M1.500 2v5.500h10V2M6.500 8v4M3 12.500h7" strokeWidth="1.200" /></Svg></StatusButton>
            <StatusButton $w={13} aria-label="Menos zoom"><Svg w={6} h={2} s="#555"><path d="M0 1h6" strokeWidth="2" /></Svg></StatusButton>
            <ZoomSlider min="0" max="100" defaultValue="33" aria-label="Zoom" />
            <StatusButton $w={10} aria-label="Mais zoom"><Svg w={8} h={8} s="#555"><path d="M0 4h8M4 0v8" strokeWidth="2" /></Svg></StatusButton>
            <StatusButton $w={42}>68%</StatusButton>
            <StatusButton $w={16} aria-label="Ajustar"><Svg w={13} h={13} s="#666"><path d="M.500.500h12v12H.500zM6.500 2v3M6.500 8v3M2 6.500h3M8 6.500h3M5.500 3l1-1 1 1M5.500 10l1 1 1-1M3 5.500l-1 1 1 1M10 5.500l1 1-1 1" /></Svg></StatusButton>
          </StatusSide>
        </StatusBar>

        <TaskBar>
          <StartButton aria-label="Iniciar">
            <FlatSvg w={16} h={16}><path d="M0 2.200l6.500-.900V7.600H0zM7.300 1.200L16 0v7.600H7.300zM0 8.400h6.500v6.300L0 13.800zM7.300 8.400H16V16l-8.700-1.200z" fill="#fff" /></FlatSvg>
          </StartButton>
          <TaskSearch>
            <Svg w={20} h={20} s="#111"><circle cx="10" cy="10" r="9" strokeWidth="2.500" /></Svg>
            <TaskSearchInput aria-label="Pesquisar no Windows" placeholder="Digite aqui para pesquisar" />
            <Svg w={11} h={16} s="#333"><path d="M3.500.500h4v10h-4zM.500 8v3c0 1.500 1 2.500 2 2.500h6c1 0 2-1 2-2.500V8M5.500 14v2M3 15.500h5" /></Svg>
          </TaskSearch>
          <Apps>
            <AppButton aria-label="Visão de tarefas"><Svg w={16} h={16} s="#fff"><path d="M.500 0v2.500h10V0M.500 4.500h10v7H.500zM.500 16v-2.500h10V16M14.500 0v3M14.500 8v8" /><path d="M13 4h3v3h-3z" fill="#fff" stroke="none" /></Svg></AppButton>
            <AppButton $run aria-label="Word">
              <FlatSvg w={22} h={22}><path d="M12 2.500h10v17H12z" fill="#fff" /><path d="M13 5.500h7M13 8.500h7M13 11.500h7M13 14.500h7M13 17h7" stroke="#2b5797" strokeWidth="1.300" /><path d="M0 2.500L13 0v22L0 19.500z" fill="#2b5797" /><path d="M2.500 8l1.700 6.500L6.300 8.500l2 6L10.300 8" stroke="#fff" strokeWidth="1.500" /></FlatSvg>
            </AppButton>
            <AppButton $run aria-label="Chrome">
              <FlatSvg w={22} h={22}><circle cx="11" cy="11" r="11" fill="#fdd04b" /><path d="M11 6h9.600A11 11 0 0 0 1.500 5.500L6.500 13z" fill="#db4f43" /><path d="M1.500 5.500A11 11 0 0 0 10.500 22l5-8.500L6.500 13.500z" fill="#2ba24c" /><circle cx="11" cy="11" r="5" fill="#fff" /><circle cx="11" cy="11" r="4" fill="#4385f4" /></FlatSvg>
            </AppButton>
            <AppButton aria-label="Lenovo">
              <FlatSvg w={24} h={24}><path d="M0 0h24v24H0z" fill="#25acdb" /><path d="M8 4l-3 15h14l-10-3z" fill="#0b3863" /><path d="M8 4h4v11h7v4H8z" fill="#fff" /></FlatSvg>
            </AppButton>
            <AppButton aria-label="Edge">
              <FlatSvg w={20} h={22}><path d="M0 9.500C1 3.500 5.500 0 10.500 0 16.500 0 20 4.500 20 10v2.500H6.500c.300 3.500 3.500 5 6.500 5 2.200 0 4-.600 5.700-1.600v4.300C16.800 21.500 14.500 22 12 22 6 22 2.200 18.300 2.200 13.500 2.200 10 4 7.200 7.500 5.500 4.500 5.700 1.800 7.200 0 9.500zM6.700 9h7c0-2.500-1.200-3.800-3.400-3.800C8.300 5.200 7 6.700 6.700 9z" fill="#0078d7" /></FlatSvg>
            </AppButton>
            <AppButton $run aria-label="Explorador de Arquivos">
              <FlatSvg w={22} h={19}><path d="M0 0h9v2h13v16H0z" fill="#fde08a" /><path d="M0 0h9v2H0z" fill="#f5b92f" /><path d="M2 1h5v1H2z" fill="#fff" /><path d="M4 10h14v8h-4v-4H8v4H4z" fill="#32abdf" /></FlatSvg>
            </AppButton>
            <AppButton aria-label="Mixer">
              <Svg w={24} h={24} s="#fff"><path d="M0 0h24v24H0z" fill="#ee3127" stroke="none" /><path d="M8.500 7v10M12.500 7v10M16.500 7v10M7 13.500h3M11 9.500h3M15 14.500h3" /></Svg>
            </AppButton>
            <AppButton $on aria-label="PowerPoint">
              <FlatSvg w={22} h={22}><path d="M12 3h10v16H12z" fill="#fff" /><path d="M13.500 14h7M13.500 16.500h7M15 6v4h4M17 5c2 0 3 1 3 3h-3z" stroke="#d24726" strokeWidth="1.200" /><path d="M0 2.500L13 0v22L0 19.500z" fill="#d24726" /><path d="M4.500 15.500V7.500h2.500a2.300 2.300 0 0 1 0 4.800H4.500" stroke="#fff" strokeWidth="1.800" /></FlatSvg>
            </AppButton>
          </Apps>
          <Tray>
            <TrayItem $w={40} aria-label="Pessoas"><Svg w={15} h={15} s="#fff"><circle cx="10.500" cy="3.500" r="2.500" /><circle cx="5" cy="8" r="2.300" /><path d="M1 15c0-6 8-6 8 0M8.500 7.500c3-2 5.500 0 5.500 3.500" /></Svg></TrayItem>
            <TrayItem $w={40} aria-label="Ícones ocultos"><Svg w={12} h={7} s="#fff"><path d="M.500 6.500L6 1l5.500 5.500" strokeWidth="1.300" /></Svg></TrayItem>
            <TrayItem $w={24} aria-label="Dropbox"><FlatSvg w={14} h={12}><path d="M3.500 0L7 2.200 3.500 4.500 0 2.200zM10.500 0L14 2.200l-3.500 2.300L7 2.200zM3.500 4.500L7 6.800 3.500 9 0 6.800zM10.500 4.500L14 6.800 10.500 9 7 6.800zM7 7.700l3.500 2.200L7 12 3.500 9.900z" fill="#fff" /></FlatSvg></TrayItem>
            <TrayItem $w={40} aria-label="Volume"><Svg w={16} h={14} s="#fff"><path d="M.500 4.500h3l4-3.500v12l-4-3.500h-3z" /><path d="M9.500 5c1 1 1 3 0 4" /><path d="M11.500 3c2 2 2 6 0 8M13.500 1c3.500 3.500 3.500 9 0 12" stroke="#777" /></Svg></TrayItem>
            <TrayItem $w={28}><span>POR</span><span>PTB</span></TrayItem>
            <TrayItem $w={78}><span>11:52</span><span>13/02/2019</span></TrayItem>
            <TrayItem $w={44} aria-label="Notificações"><Svg w={16} h={16} s="#fff"><path d="M.500.500h15v12h-5L8 15l-2.500-2.500h-5z" strokeWidth="1.200" /></Svg></TrayItem>
            <DesktopEdge />
          </Tray>
        </TaskBar>
      </Page>
    </>
  );
}
